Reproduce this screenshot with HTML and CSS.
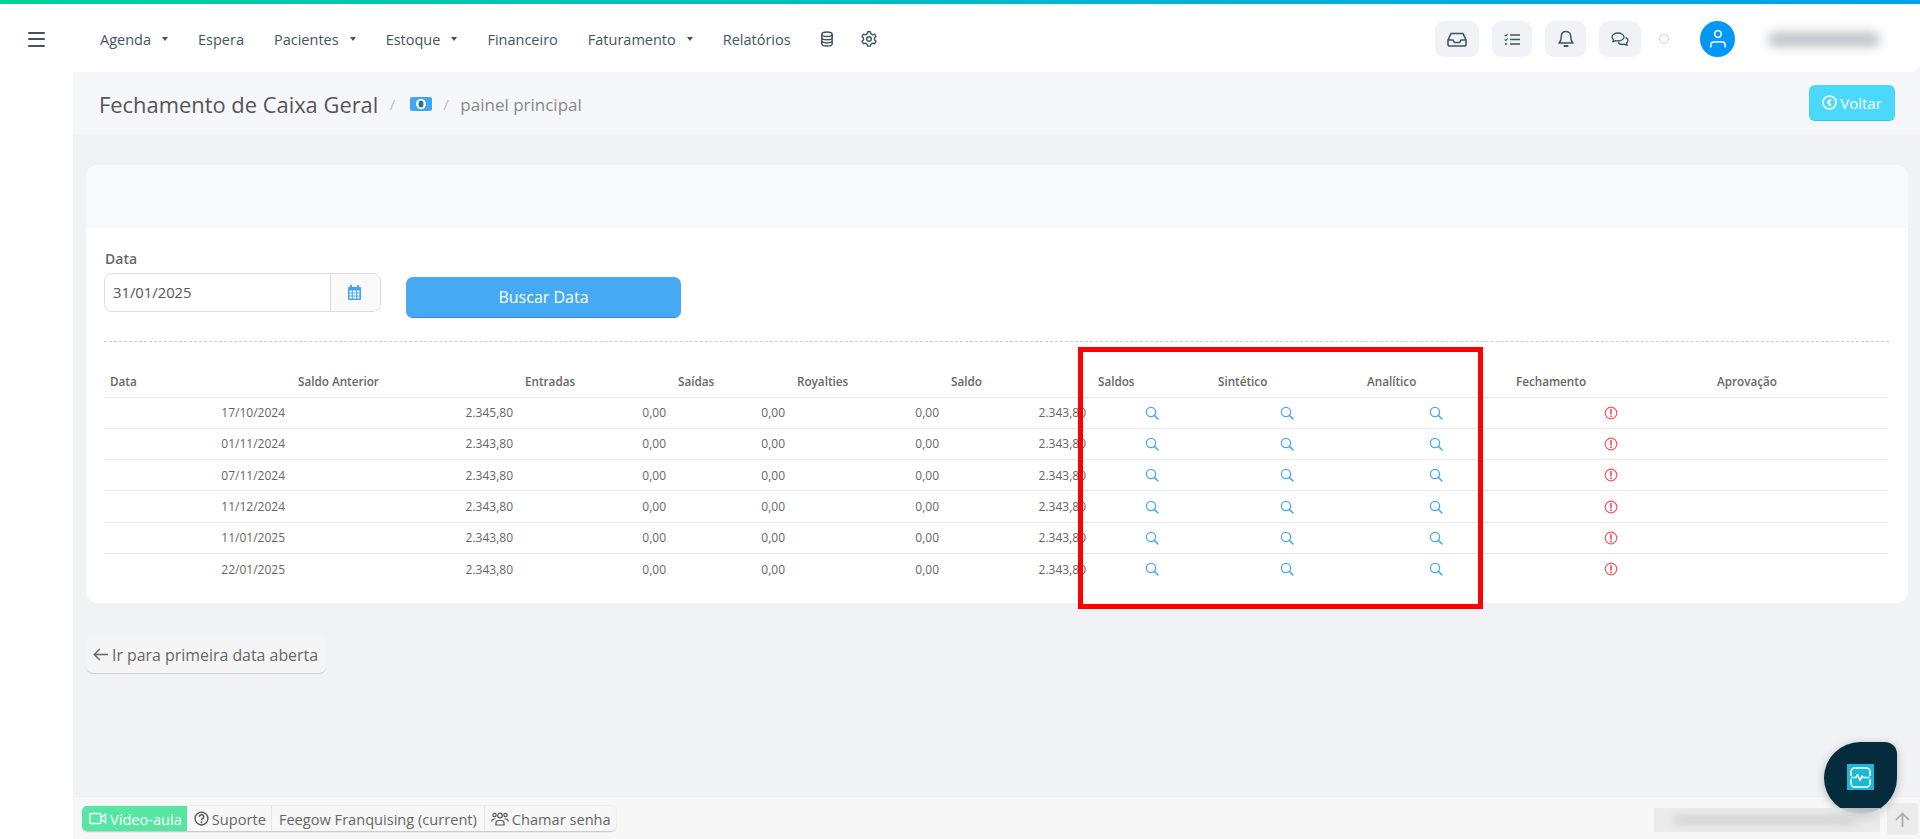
FILE: index.html
```html
<!DOCTYPE html>
<html lang="pt-BR">
<head>
<meta charset="utf-8">
<title>Fechamento de Caixa Geral</title>
<link rel="stylesheet" href="styles.css">
</head>
<body>
<svg class="defs" aria-hidden="true">
  <symbol id="search" viewBox="0 0 14 14"><circle cx="6" cy="6" r="4.6" fill="none" stroke="currentColor" stroke-width="1.3"/><path d="M9.4 9.4l3.6 3.6" stroke="currentColor" stroke-width="1.5" stroke-linecap="round"/></symbol>
  <symbol id="alert" viewBox="0 0 14 14"><circle cx="7" cy="7" r="5.8" fill="none" stroke="currentColor" stroke-width="1.2"/><path d="M7 3.6v4.2" stroke="currentColor" stroke-width="1.7" stroke-linecap="round"/><circle cx="7" cy="10.2" r="1" fill="currentColor"/></symbol>
</svg>
<div class="topline"></div>
<header class="navbar">
  <button class="burger" aria-label="Menu"><span></span><span></span><span></span></button>
  <nav class="menu">
    <a class="menu-item">Agenda<i class="caret"></i></a>
    <a class="menu-item">Espera</a>
    <a class="menu-item">Pacientes<i class="caret"></i></a>
    <a class="menu-item">Estoque<i class="caret"></i></a>
    <a class="menu-item">Financeiro</a>
    <a class="menu-item">Faturamento<i class="caret"></i></a>
    <a class="menu-item">Relatórios</a>
    <a class="menu-item menu-icon"><svg width="14" height="16" viewBox="0 0 14 16" fill="none" stroke="#3f5561" stroke-width="1.5"><ellipse cx="7" cy="3.2" rx="5.2" ry="2.3"/><path d="M1.8 3.2v9.6c0 1.3 2.3 2.3 5.2 2.3s5.2-1 5.2-2.3V3.2M1.8 6.4c0 1.3 2.3 2.3 5.2 2.3s5.2-1 5.2-2.3M1.8 9.6c0 1.3 2.3 2.3 5.2 2.3s5.2-1 5.2-2.3"/></svg></a>
    <a class="menu-item menu-icon"><svg width="16" height="16" viewBox="0 0 16 16" fill="none" stroke="#3f5561" stroke-width="1.4" stroke-linejoin="round"><path d="M6.6 1.2h2.8l.5 2 1.7 1 2-.6 1.4 2.4-1.5 1.4v1.9l1.5 1.4-1.4 2.4-2-.6-1.7 1-.5 2H6.6l-.5-2-1.700-1-2 .6-1.400-2.400 1.500-1.400V7.400L1 6l1.400-2.400 2 .6 1.700-1z" transform="translate(0 -.4)"/><circle cx="8" cy="8" r="2.3"/></svg></a>
  </nav>
  <div class="tools">
    <button class="tool tool-a"><svg width="20" height="15" viewBox="0 0 20 15" fill="none" stroke="#3f5561" stroke-width="1.6" stroke-linejoin="round"><path d="M1 8l3-6.500h12L19 8v4.500a1.500 1.500 0 0 1-1.500 1.500h-15A1.500 1.500 0 0 1 1 12.500zM1 8h5l1.300 2.500h5.400L14 8h5"/></svg></button>
    <button class="tool tool-b"><svg width="16" height="13" viewBox="0 0 16 13" fill="none" stroke="#3f5561" stroke-width="1.500"><path d="M6 2h10M6 6.500h10M6 11h10"/><path d="M.6 1.800l1.200 1.200L3.800.8M.6 6.300l1.200 1.200 2-2.200" stroke-width="1.100"/><circle cx="2" cy="11" r="1.100" fill="#3f5561" stroke="none"/></svg></button>
    <button class="tool tool-c"><svg width="16" height="18" viewBox="0 0 16 18" fill="none" stroke="#3f5561" stroke-width="1.500" stroke-linejoin="round"><path d="M8 1.500c-3 0-4.700 2.200-4.700 5 0 3.500-1 5.200-2.300 6.500h14c-1.300-1.300-2.300-3-2.300-6.500 0-2.800-1.700-5-4.700-5z"/><path d="M6.500 16h3" stroke-width="2" stroke-linecap="round"/></svg></button>
    <button class="tool tool-d"><svg width="18" height="15" viewBox="0 0 18 15" fill="none" stroke="#3f5561" stroke-width="1.300" stroke-linejoin="round"><path d="M7 1C3.700 1 1 2.800 1 5c0 1 .6 1.900 1.500 2.600L1.800 9.800l2.700-1.100c.8.200 1.600.3 2.500.3 3.300 0 6-1.800 6-4S10.300 1 7 1z"/><path d="M14.500 5.300C16 6 17 7.200 17 8.500c0 1-.6 1.900-1.500 2.600l.7 2.200-2.700-1.100c-2.500.6-5.100-.1-6.300-1.700"/></svg></button>
    <span class="status"></span>
    <span class="avatar"><svg width="18" height="20" viewBox="0 0 18 20" fill="none" stroke="#d8eefc" stroke-width="1.800"><circle cx="9" cy="5" r="3.300"/><path d="M1.800 18.500v-2.300c0-2 1.500-3.400 3.500-3.400h7.400c2 0 3.500 1.400 3.500 3.400v2.300"/></svg></span>
    <span class="blur-name"></span>
  </div>
</header>
<div class="layout">
  <aside class="sidebar"></aside>
  <main class="main">
    <div class="page-head">
      <h1 class="page-title">Fechamento de Caixa Geral</h1>
      <span class="crumb-sep">/</span>
      <svg class="money" width="22" height="14" viewBox="0 0 22 14"><rect width="22" height="14" rx="2" fill="#42a5f0"/><ellipse cx="11" cy="7" rx="5" ry="5.200" fill="#fff"/><ellipse cx="11" cy="7" rx="2.500" ry="3.600" fill="#2b6f9e"/></svg>
      <span class="crumb-sep">/</span>
      <span class="crumb">painel principal</span>
      <button class="btn-back"><svg width="15" height="15" viewBox="0 0 15 15" fill="none" stroke="#fff" stroke-width="1.700"><circle cx="7.500" cy="7.500" r="6.500"/><path d="M9 4.200L5.800 7.500 9 10.800" stroke-width="2"/></svg>Voltar</button>
    </div>
    <div class="content">
      <section class="card">
        <div class="card-head"></div>
        <div class="card-body">
          <div class="filter">
            <div class="field">
              <label class="field-label">Data</label>
              <div class="input-group">
                <span class="input">31/01/2025</span>
                <span class="addon"><svg width="13" height="15" viewBox="0 0 13 15"><path fill="#42a5f0" d="M2 0h2v2h5V0h2v2h1a1 1 0 0 1 1 1v11a1 1 0 0 1-1 1H1a1 1 0 0 1-1-1V3a1 1 0 0 1 1-1h1z"/><path fill="#fff" d="M1.500 5.500h2.300v2h-2.300zM4.800 5.500h3.400v2H4.800zM9.200 5.500h2.300v2H9.200zM1.500 8.500h2.300v2h-2.300zM4.800 8.500h3.400v2H4.800zM9.200 8.500h2.300v2H9.200zM1.500 11.500h2.300v2h-2.300zM4.800 11.500h3.400v2H4.800zM9.200 11.500h2.300v2H9.200z"/></svg></span>
              </div>
            </div>
            <button class="btn-search">Buscar Data</button>
          </div>
          <hr class="dash">
          <table class="grid">
            <colgroup>
              <col class="c1"><col class="c2"><col class="c3"><col class="c4"><col class="c5"><col class="c6"><col class="c7"><col class="c8"><col class="c9"><col class="c10"><col class="c11">
            </colgroup>
            <thead>
              <tr><th>Data</th><th>Saldo Anterior</th><th>Entradas</th><th>Saídas</th><th>Royalties</th><th>Saldo</th><th>Saldos</th><th>Sintético</th><th>Analítico</th><th>Fechamento</th><th>Aprovação</th></tr>
            </thead>
            <tbody>
              <tr><td>17/10/2024</td><td>2.345,80</td><td>0,00</td><td>0,00</td><td>0,00</td><td>2.343,80</td><td class="ic"><svg class="i-s"><use href="#search"/></svg></td><td class="ic"><svg class="i-s"><use href="#search"/></svg></td><td class="ic"><svg class="i-s"><use href="#search"/></svg></td><td class="ic"><svg class="i-a"><use href="#alert"/></svg></td><td></td></tr>
              <tr><td>01/11/2024</td><td>2.343,80</td><td>0,00</td><td>0,00</td><td>0,00</td><td>2.343,80</td><td class="ic"><svg class="i-s"><use href="#search"/></svg></td><td class="ic"><svg class="i-s"><use href="#search"/></svg></td><td class="ic"><svg class="i-s"><use href="#search"/></svg></td><td class="ic"><svg class="i-a"><use href="#alert"/></svg></td><td></td></tr>
              <tr><td>07/11/2024</td><td>2.343,80</td><td>0,00</td><td>0,00</td><td>0,00</td><td>2.343,80</td><td class="ic"><svg class="i-s"><use href="#search"/></svg></td><td class="ic"><svg class="i-s"><use href="#search"/></svg></td><td class="ic"><svg class="i-s"><use href="#search"/></svg></td><td class="ic"><svg class="i-a"><use href="#alert"/></svg></td><td></td></tr>
              <tr><td>11/12/2024</td><td>2.343,80</td><td>0,00</td><td>0,00</td><td>0,00</td><td>2.343,80</td><td class="ic"><svg class="i-s"><use href="#search"/></svg></td><td class="ic"><svg class="i-s"><use href="#search"/></svg></td><td class="ic"><svg class="i-s"><use href="#search"/></svg></td><td class="ic"><svg class="i-a"><use href="#alert"/></svg></td><td></td></tr>
              <tr><td>11/01/2025</td><td>2.343,80</td><td>0,00</td><td>0,00</td><td>0,00</td><td>2.343,80</td><td class="ic"><svg class="i-s"><use href="#search"/></svg></td><td class="ic"><svg class="i-s"><use href="#search"/></svg></td><td class="ic"><svg class="i-s"><use href="#search"/></svg></td><td class="ic"><svg class="i-a"><use href="#alert"/></svg></td><td></td></tr>
              <tr><td>22/01/2025</td><td>2.343,80</td><td>0,00</td><td>0,00</td><td>0,00</td><td>2.343,80</td><td class="ic"><svg class="i-s"><use href="#search"/></svg></td><td class="ic"><svg class="i-s"><use href="#search"/></svg></td><td class="ic"><svg class="i-s"><use href="#search"/></svg></td><td class="ic"><svg class="i-a"><use href="#alert"/></svg></td><td></td></tr>
            </tbody>
          </table>
        </div>
      </section>
      <button class="btn-first"><svg width="15" height="13" viewBox="0 0 15 13" fill="none" stroke="#666" stroke-width="1.500"><path d="M15 6.500H1.500M6.800 1L1.300 6.500 6.800 12"/></svg>Ir para primeira data aberta</button>
    </div>
    <footer class="footer">
      <div class="btn-strip">
        <a class="strip green"><svg width="18" height="13" viewBox="0 0 18 13" fill="none" stroke="#fff" stroke-width="1.500"><rect x=".8" y="1.500" width="11" height="10" rx="1"/><path d="M12 5.500l4.500-3v8l-4.500-3" /></svg>Vídeo-aula</a>
        <a class="strip strip-s"><svg width="15" height="15" viewBox="0 0 14 14" fill="none" stroke="#555" stroke-width="1.300"><circle cx="7" cy="7" r="6"/><path d="M5 5.400a2 2 0 1 1 3 1.700c-.7.400-1 .8-1 1.500" stroke-width="1.400"/><circle cx="7" cy="10.500" r=".9" fill="#555" stroke="none"/></svg>Suporte</a>
        <a class="strip">Feegow Franquising (current)</a>
        <a class="strip"><svg width="18" height="14" viewBox="0 0 18 14" fill="none" stroke="#555" stroke-width="1.200"><circle cx="9" cy="3.500" r="2.300"/><circle cx="3.500" cy="3" r="1.700"/><circle cx="14.500" cy="3" r="1.700"/><path d="M5 13v-2c0-1.500 1-2.500 2.500-2.500h3c1.500 0 2.500 1 2.500 2.500v2zM.7 9.500c0-1.500 1-2.500 2.300-2.500h1.500M17.300 9.500c0-1.500-1-2.500-2.300-2.500h-1.500"/></svg>Chamar senha</a>
      </div>
      <div class="foot-right">
        <span class="foot-blur"><i></i></span>
        <button class="btn-up" aria-label="Topo"><svg width="15" height="15" viewBox="0 0 15 15" fill="none" stroke="#aaa" stroke-width="1.700"><path d="M7.500 15V1.500M1 8l6.500-6.500L14 8"/></svg></button>
      </div>
    </footer>
  </main>
</div>
<div class="highlight"></div>
<div class="chat-fab"><span class="chat-icon"><svg width="21" height="21" viewBox="0 0 21 21" fill="none" stroke="#fff" stroke-width="1.500" stroke-linejoin="round"><path d="M1 9V4.500A3.500 3.500 0 0 1 4.500 1h12A3.500 3.500 0 0 1 20 4.500V9M1 12v4.500A3.500 3.500 0 0 0 4.500 20h12a3.500 3.500 0 0 0 3.500-3.500V12"/><path d="M1 10.500h5l1.500-3 2.500 6 2-4.500 1 1.500h6.500"/></svg></span></div>
</body>
</html>
```
FILE: styles.css
```css
* { box-sizing: border-box; }
html, body { height: 100%; }
body {
  margin: 0;
  height: 839px;
  overflow: hidden;
  display: flex;
  flex-direction: column;
  background: #f0f2f6;
  font-family: "Open Sans", "Noto Sans", sans-serif;
  font-size: 13px;
  color: #666;
}
.defs { position: absolute; width: 0; height: 0; }
button { font-family: inherit; cursor: pointer; }
.topline { height: 4px; flex: none; background: linear-gradient(90deg, #00d09a 0%, #00b9c8 50%, #00a0f0 100%); }
.navbar {
  flex: none;
  height: 68px;
  background: #fff;
  display: flex;
  align-items: center;
  border-bottom-right-radius: 8px;
  padding-left: 28px;
  padding-top: 2px;
}
.burger { width: 17px; height: 15px; padding: 0; border: 0; background: none; display: flex; flex-direction: column; justify-content: space-between; margin-right: 55px; }
.burger span { display: block; height: 2px; background: #3f5561; border-radius: 1px; }
.menu { display: flex; align-items: center; gap: 30px; }
.menu-item { font-size: 14.5px; color: #3f5561; display: flex; align-items: center; white-space: nowrap; }
.caret { width: 0; height: 0; margin-left: 11px; border-left: 3.500px solid transparent; border-right: 3.500px solid transparent; border-top: 4px solid #3f5561; }
.menu-icon { line-height: 0; margin-left: -1px; }
.menu-icon:last-child { margin-left: -3px; }
.tools { margin-left: auto; display: flex; align-items: center; height: 36px; padding-right: 40px; }
.tool { height: 36px; border: 0; border-radius: 9px; background: #f0f2f6; display: flex; align-items: center; justify-content: center; padding: 0; margin-right: 13px; }
.tool-a { width: 44px; }
.tool-b { width: 40px; }
.tool-c { width: 41px; }
.tool-d { width: 42px; margin-right: 18px; }
.status { width: 10px; height: 10px; border: 1px solid #ccd2d6; border-radius: 50%; margin-right: 31px; }
.avatar { width: 35px; height: 36px; border-radius: 50%; background: #0098f4; display: flex; align-items: center; justify-content: center; }
.blur-name { width: 112px; height: 13px; margin-left: 33px; background: #b4bbc0; border-radius: 7px; filter: blur(6px); }
.layout { flex: 1; display: flex; min-height: 0; }
.sidebar { width: 73px; flex: none; background: #fff; }
.main { flex: 1; min-width: 0; display: flex; flex-direction: column; }
.page-head { height: 62px; flex: none; background: #f6f7fb; display: flex; align-items: center; padding: 2px 25px 0 26px; }
.page-title { margin: 0; font-size: 21.900px; font-weight: 400; color: #555; white-space: nowrap; }
.crumb-sep { color: #bbb; font-size: 15px; margin: 0 11.500px; }
.crumb { font-size: 17px; color: #888; }
.money { flex: none; margin-left: 3px; }
.btn-back { margin-left: auto; height: 36px; width: 86px; border: 0; border-bottom: 1px solid #3cc4e4; border-radius: 6px; background: #4ad9fb; color: #fff; font-size: 15px; display: flex; align-items: center; justify-content: center; gap: 3px; padding: 0; margin-top: -2px; }
.content { flex: 1; min-height: 0; padding: 31px 12px 0 13px; }
.card { background: #fff; border-radius: 12px; height: 438px; overflow: hidden; }
.card-head { height: 63px; background: #f8f9fb; }
.card-body { padding: 20px 19px 0 18px; }
.filter { display: flex; align-items: flex-start; gap: 25px; }
.field-label { display: block; font-size: 14px; line-height: 20px; color: #666; margin: 1px 0 4px 1px; font-weight: 600; }
.input-group { display: flex; width: 277px; height: 39px; border: 1px solid #ddd; border-radius: 8px; overflow: hidden; }
.input { flex: 1; line-height: 37px; padding-left: 8px; font-size: 14.800px; color: #555; }
.addon { width: 50px; padding-right: 3px; border-left: 1px solid #ddd; background: #fafafa; display: flex; align-items: center; justify-content: center; }
.btn-search { margin-top: 29px; width: 275px; height: 41px; border: 0; border-bottom: 1px solid #2f8fd6; border-radius: 7px; background: #45a9f3; color: #fff; font-size: 16px; font-weight: 500; padding: 0; }
.dash { border: 0; border-top: 1px dashed #ccc; margin: 23px 0 0; }
.grid { width: 1784px; table-layout: fixed; border-collapse: collapse; margin-top: 24px; font-size: 12px; }
.c1 { width: 187px; } .c2 { width: 228px; } .c3 { width: 153px; } .c4 { width: 119px; } .c5 { width: 154px; } .c6 { width: 147px; } .c7 { width: 120px; } .c8 { width: 149px; } .c9 { width: 149px; } .c10 { width: 201px; } .c11 { width: 177px; }
.grid th { height: 31px; padding: 0 6px; text-align: left; font-size: 11.700px; font-weight: 600; color: #666; border-bottom: 1px solid #e8e8e8; white-space: nowrap; }
.grid th:nth-child(2) { padding-left: 7px; }
.grid td { height: 31.300px; padding: 0 6px; text-align: right; color: #666; border-bottom: 1px solid #e8e8e8; white-space: nowrap; }
.grid tbody tr:last-child td { border-bottom: 0; }
.grid td.ic { text-align: center; line-height: 0; }
.i-s { width: 14px; height: 14px; color: #4aa8f0; }
.i-a { width: 14px; height: 14px; color: #ee5a5f; }
.btn-first { margin-top: 33px; height: 38px; padding: 0 8px 0 7px; border: 0; border-bottom: 1px solid #ccc; border-radius: 7px; background: #f5f5f5; color: #666; font-size: 15.900px; display: flex; align-items: center; gap: 4px; }
.footer { flex: none; height: 43px; background: #f7f7f7; border-top: 1px solid #eee; display: flex; align-items: flex-start; justify-content: space-between; padding: 9px 2px 0 9px; }
.btn-strip { display: flex; height: 26px; background: #f7f7f7; border-radius: 5px; border-bottom: 1px solid #ccc; box-shadow: 0 0 0 1px #eee; }
.strip { display: flex; align-items: center; gap: 3px; padding: 0 7px; font-size: 14.600px; color: #666; border-right: 1px solid #e6e6e6; white-space: nowrap; }
.strip:last-child { border-right: 0; padding: 0 5px 0 6px; }
.strip-s { padding-right: 5px; }
.strip.green { background: #55e6a3; color: #fff; border-radius: 5px 0 0 5px; border: 0; padding: 0 5px 0 7px; }
.foot-right { display: flex; align-items: flex-start; }
.foot-blur { position: relative; z-index: 2; width: 226px; height: 24px; margin-top: 2px; margin-right: 7px; background: rgba(230,230,230,.7); backdrop-filter: blur(7px); overflow: hidden; display: block; }
.foot-blur i { display: block; width: 180px; height: 10px; margin: 7px 0 0 20px; background: #d2d2d2; filter: blur(5px); }
.btn-up { width: 31px; height: 32px; margin-top: -3px; border: 0; border-radius: 4px; background: #ebebeb; padding: 0; display: flex; align-items: center; justify-content: center; }
.highlight { position: absolute; left: 1078px; top: 347px; width: 405px; height: 262px; border: 5px solid #f00; pointer-events: none; }
.chat-fab { position: absolute; z-index: 1; left: 1824px; top: 742px; width: 73px; height: 72px; background: #052c3d; border-radius: 50% 12px 50% 50%; box-shadow: 0 2px 8px rgba(0,0,0,.25); display: flex; align-items: center; justify-content: center; padding-bottom: 2px; }
.chat-icon { width: 27px; height: 26px; background: #1bb9d8; display: flex; align-items: center; justify-content: center; }
```
